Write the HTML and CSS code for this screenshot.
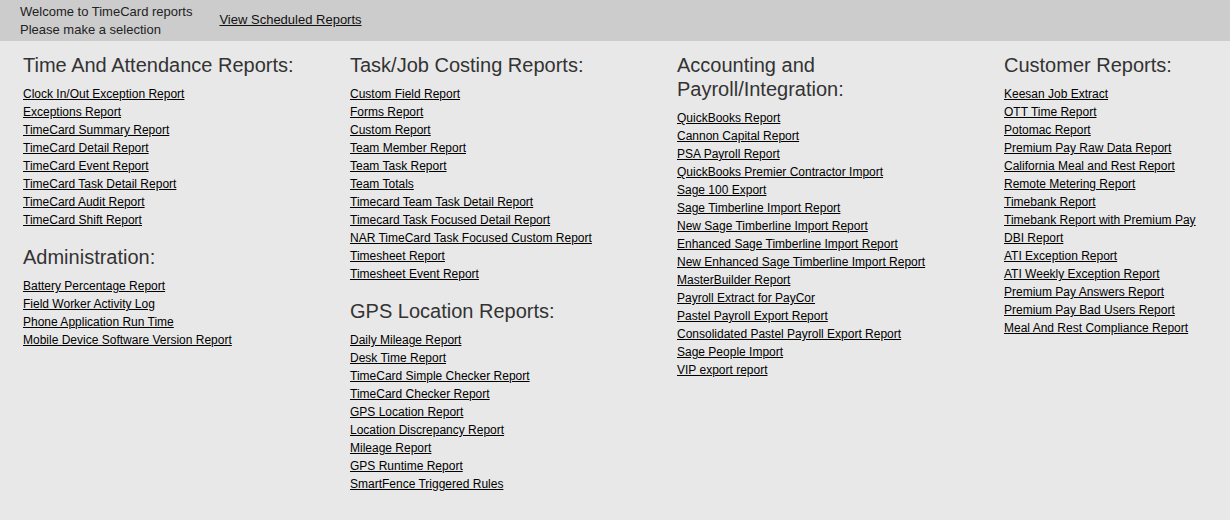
FILE: index.html
```html
<!DOCTYPE html>
<html>
<head>
<meta charset="utf-8">
<title>TimeCard reports</title>
<link rel="stylesheet" href="styles.css">
</head>
<body>
<header class="topbar">
  <div class="welcome">
    <div>Welcome to TimeCard reports</div>
    <div>Please make a selection</div>
  </div>
  <a class="scheduled" href="#">View Scheduled Reports</a>
</header>
<main class="columns">
  <section class="col">
    <h2>Time And Attendance Reports:</h2>
    <ul>
      <li><a href="#">Clock In/Out Exception Report</a></li>
      <li><a href="#">Exceptions Report</a></li>
      <li><a href="#">TimeCard Summary Report</a></li>
      <li><a href="#">TimeCard Detail Report</a></li>
      <li><a href="#">TimeCard Event Report</a></li>
      <li><a href="#">TimeCard Task Detail Report</a></li>
      <li><a href="#">TimeCard Audit Report</a></li>
      <li><a href="#">TimeCard Shift Report</a></li>
    </ul>
    <h2>Administration:</h2>
    <ul>
      <li><a href="#">Battery Percentage Report</a></li>
      <li><a href="#">Field Worker Activity Log</a></li>
      <li><a href="#">Phone Application Run Time</a></li>
      <li><a href="#">Mobile Device Software Version Report</a></li>
    </ul>
  </section>
  <section class="col">
    <h2>Task/Job Costing Reports:</h2>
    <ul>
      <li><a href="#">Custom Field Report</a></li>
      <li><a href="#">Forms Report</a></li>
      <li><a href="#">Custom Report</a></li>
      <li><a href="#">Team Member Report</a></li>
      <li><a href="#">Team Task Report</a></li>
      <li><a href="#">Team Totals</a></li>
      <li><a href="#">Timecard Team Task Detail Report</a></li>
      <li><a href="#">Timecard Task Focused Detail Report</a></li>
      <li><a href="#">NAR TimeCard Task Focused Custom Report</a></li>
      <li><a href="#">Timesheet Report</a></li>
      <li><a href="#">Timesheet Event Report</a></li>
    </ul>
    <h2>GPS Location Reports:</h2>
    <ul>
      <li><a href="#">Daily Mileage Report</a></li>
      <li><a href="#">Desk Time Report</a></li>
      <li><a href="#">TimeCard Simple Checker Report</a></li>
      <li><a href="#">TimeCard Checker Report</a></li>
      <li><a href="#">GPS Location Report</a></li>
      <li><a href="#">Location Discrepancy Report</a></li>
      <li><a href="#">Mileage Report</a></li>
      <li><a href="#">GPS Runtime Report</a></li>
      <li><a href="#">SmartFence Triggered Rules</a></li>
    </ul>
  </section>
  <section class="col">
    <h2>Accounting and<br>Payroll/Integration:</h2>
    <ul>
      <li><a href="#">QuickBooks Report</a></li>
      <li><a href="#">Cannon Capital Report</a></li>
      <li><a href="#">PSA Payroll Report</a></li>
      <li><a href="#">QuickBooks Premier Contractor Import</a></li>
      <li><a href="#">Sage 100 Export</a></li>
      <li><a href="#">Sage Timberline Import Report</a></li>
      <li><a href="#">New Sage Timberline Import Report</a></li>
      <li><a href="#">Enhanced Sage Timberline Import Report</a></li>
      <li><a href="#">New Enhanced Sage Timberline Import Report</a></li>
      <li><a href="#">MasterBuilder Report</a></li>
      <li><a href="#">Payroll Extract for PayCor</a></li>
      <li><a href="#">Pastel Payroll Export Report</a></li>
      <li><a href="#">Consolidated Pastel Payroll Export Report</a></li>
      <li><a href="#">Sage People Import</a></li>
      <li><a href="#">VIP export report</a></li>
    </ul>
  </section>
  <section class="col">
    <h2>Customer Reports:</h2>
    <ul>
      <li><a href="#">Keesan Job Extract</a></li>
      <li><a href="#">OTT Time Report</a></li>
      <li><a href="#">Potomac Report</a></li>
      <li><a href="#">Premium Pay Raw Data Report</a></li>
      <li><a href="#">California Meal and Rest Report</a></li>
      <li><a href="#">Remote Metering Report</a></li>
      <li><a href="#">Timebank Report</a></li>
      <li><a href="#">Timebank Report with Premium Pay</a></li>
      <li><a href="#">DBI Report</a></li>
      <li><a href="#">ATI Exception Report</a></li>
      <li><a href="#">ATI Weekly Exception Report</a></li>
      <li><a href="#">Premium Pay Answers Report</a></li>
      <li><a href="#">Premium Pay Bad Users Report</a></li>
      <li><a href="#">Meal And Rest Compliance Report</a></li>
    </ul>
  </section>
</main>
</body>
</html>
```

FILE: styles.css
```css
html, body {
  margin: 0;
  padding: 0;
  background: #e8e8e8;
  font-family: "Liberation Sans", Arial, sans-serif;
  color: #333333;
  overflow-x: hidden;
}

.topbar {
  background: #cccccc;
  height: 41px;
  box-sizing: border-box;
  padding: 3px 0 0 20px;
  display: flex;
  align-items: flex-start;
  gap: 27px;
  font-size: 13px;
  line-height: 18px;
  color: #222222;
}

.scheduled {
  color: #111111;
  margin-top: 8px;
}

.columns {
  display: grid;
  grid-template-columns: 297px 297px 297px 1fr;
  column-gap: 30px;
  padding: 12px 0 20px 23px;
}

.col h2 {
  margin: 0;
  font-size: 20px;
  font-weight: normal;
  line-height: 24px;
  color: #333333;
}

.col ul {
  list-style: none;
  margin: 8px 0 16px 0;
  padding: 0;
  font-size: 12px;
  line-height: 18px;
}

.col a {
  color: #000000;
  text-decoration: underline;
  white-space: nowrap;
}
```
